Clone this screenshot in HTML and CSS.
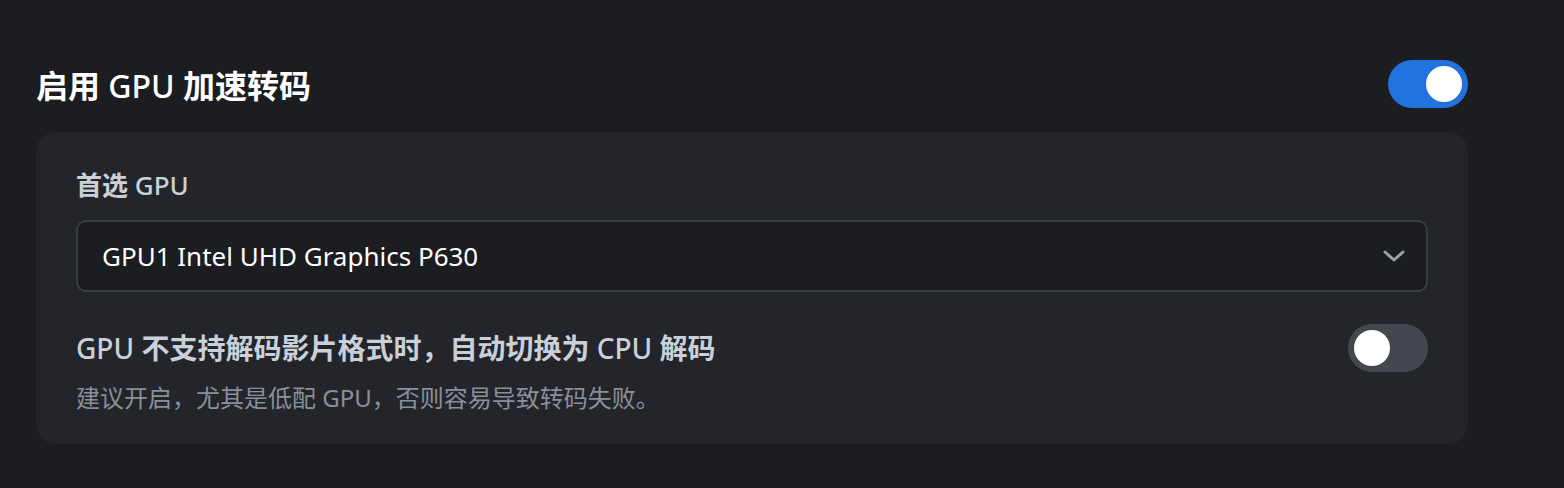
FILE: index.html
```html
<!DOCTYPE html>
<html lang="zh-CN">
<head>
    <meta charset="UTF-8">
    <meta name="viewport" content="width=device-width, initial-scale=1.0">
    <title>GPU 加速转码</title>
    <link rel="stylesheet" href="styles.css">
</head>
<body>
    <div class="page">
        <div class="header">
            <h2 class="title">启用 <span class="latin">GPU</span> 加速转码</h2>
            <span class="switch on"><span class="knob"></span></span>
        </div>

        <div class="card">
            <div class="label">首选 <span class="latin">GPU</span></div>
            <div class="select">
                <span class="select-value">GPU1 Intel UHD Graphics P630</span>
                <svg class="chevron" width="24" height="16" viewBox="0 0 24 16">
                    <polyline points="3,4 12,12 21,4" fill="none" stroke="#9aa2ac" stroke-width="3" stroke-linecap="round" stroke-linejoin="round"/>
                </svg>
            </div>

            <div class="row">
                <div class="row-text">
                    <div class="row-title"><span class="latin">GPU</span> 不支持解码影片格式时，自动切换为 <span class="latin">CPU</span> 解码</div>
                    <div class="row-desc">建议开启，尤其是低配 GPU，否则容易导致转码失败。</div>
                </div>
                <span class="switch"><span class="knob"></span></span>
            </div>
        </div>
    </div>
</body>
</html>
```

FILE: styles.css
```css
body {
    margin: 0;
    background-color: #1b1d21;
    font-family: "Noto Sans", "Noto Sans CJK SC", sans-serif;
    color: #ffffff;
}

.page {
    padding: 60px 96px 0 36px;
}

.header {
    display: flex;
    justify-content: space-between;
    align-items: center;
    height: 48px;
}

.title {
    margin: 0;
    font-size: 32px;
    font-weight: 700;
    line-height: 48px;
    padding-top: 4px;
}

.latin {
    font-weight: 500;
}

.switch {
    display: flex;
    align-items: center;
    width: 80px;
    height: 48px;
    padding: 0 6px;
    box-sizing: border-box;
    border-radius: 24px;
    background-color: #44474d;
    flex-shrink: 0;
}

.switch.on {
    background-color: #2272de;
    justify-content: flex-end;
}

.knob {
    width: 36px;
    height: 36px;
    border-radius: 50%;
    background-color: #ffffff;
}

.card {
    margin-top: 24px;
    padding: 36px 40px 30px;
    background-color: #23252a;
    border-radius: 20px;
}

.label {
    font-size: 26px;
    font-weight: 700;
    line-height: 34px;
    color: #c9d0d8;
    margin-bottom: 18px;
}

.select {
    display: flex;
    align-items: center;
    justify-content: space-between;
    height: 72px;
    box-sizing: border-box;
    padding: 0 20px 0 24px;
    border: 2px solid #3a3d44;
    border-radius: 10px;
    background-color: #1b1d21;
}

.select-value {
    font-size: 26px;
    color: #ffffff;
}

.row {
    display: flex;
    justify-content: space-between;
    align-items: flex-start;
    margin-top: 32px;
}

.row-title {
    font-size: 28px;
    font-weight: 700;
    line-height: 48px;
    color: #c9d0d8;
}

.row-desc {
    margin-top: 10px;
    font-size: 24px;
    line-height: 32px;
    color: #8a9099;
}
```
